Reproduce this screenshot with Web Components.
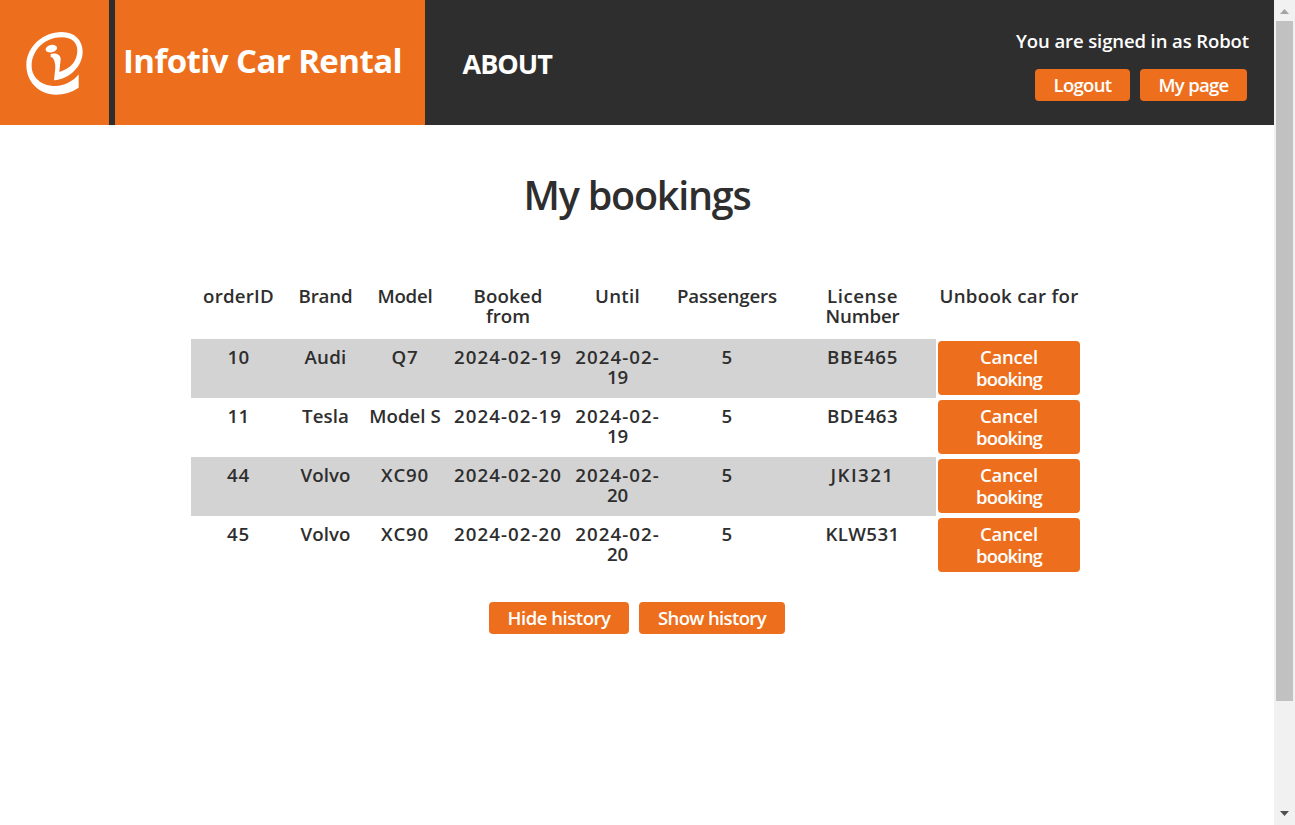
<!DOCTYPE html>
<html lang="en">
<head>
<meta charset="utf-8">
<title>Infotiv Car Rental</title>
<style>
html,body{margin:0;height:100%;overflow:hidden;background:#fff}
body{font-family:"Open Sans","Noto Sans",sans-serif;font-weight:600;color:#2e2e2e;--orange:#ed6f1d;--dark:#2e2e2e}
</style>
</head>
<body>
<rental-app></rental-app>
<script>
// A line of text whose tracking is adjusted to fill a set width.
class TrackedText extends HTMLElement {
  connectedCallback() {
    const root = this.attachShadow({mode: 'open'});
    root.innerHTML = `<style>:host{display:block;white-space:nowrap;width:max-content;margin:0 auto}span{display:inline-block}</style><span><slot></slot></span>`;
    const span = root.querySelector('span');
    const n = this.textContent.length;
    const ls = (Number(this.getAttribute('w')) - span.getBoundingClientRect().width) / n;
    span.style.letterSpacing = ls + 'px';
  }
}

class RentalButton extends HTMLElement {
  constructor() {
    super();
    this.attachShadow({mode: 'open'}).innerHTML = `<style>
      :host{display:block}
      button{display:block;box-sizing:border-box;width:100%;margin:0;border:0;border-radius:4px;padding:5px 0;background:var(--orange);color:#fff;font:inherit;font-size:18.5px;line-height:22px;text-align:center;cursor:pointer}
    </style><button><slot></slot></button>`;
  }
}

class RentalLogo extends HTMLElement {
  constructor() {
    super();
    this.attachShadow({mode: 'open'}).innerHTML = `<style>:host{display:block;width:109px;height:125px;background:var(--orange)}svg{display:block}</style>
    <svg width="109" height="125" viewBox="0 0 327 375" fill="#fff">
      <path d="M236 223V263Q205 284 168 284C115 284 79 243 79 195C79 140 130 96 185 96C225 96 248 122 248 155C248 198 210 236 162 241L166 203C166 188 162 172 152 171V162C166 157 182 163 182 177L178 216C210 207 232 185 232 151C232 128 215 112 185 112C135 112 95 150 95 198C95 233 125 258 165 258C195 258 220 243 236 223Z"/>
      <ellipse cx="154" cy="146" rx="17.5" ry="11" transform="rotate(-12 154 146)"/>
    </svg>`;
  }
}

class RentalHeader extends HTMLElement {
  constructor() {
    super();
    this.attachShadow({mode: 'open'}).innerHTML = `<style>
      :host{display:flex;height:125px;background:var(--dark);color:#fff}
      .title{width:310px;margin-left:6px;background:var(--orange);box-sizing:border-box;padding:41px 0 0 8px;font-size:33px;line-height:40px;font-weight:700}
      .title tracked-text,.about tracked-text{margin:0}
      .about{padding:44px 0 0 37.5px;font-size:27px;line-height:40px;font-weight:700}
      .user{margin-left:auto;padding:30px 25px 0 0;font-size:18.5px;line-height:22px}
      .buttons{display:flex;justify-content:flex-end;gap:10px;margin-top:17px;padding-right:2px}
    </style>
    <rental-logo></rental-logo>
    <div class="title"><tracked-text w="279">Infotiv Car Rental</tracked-text></div>
    <div class="about"><tracked-text w="89.5">ABOUT</tracked-text></div>
    <div class="user">
      <tracked-text w="233">You are signed in as Robot</tracked-text>
      <div class="buttons">
        <rental-button style="width:95px"><tracked-text w="58">Logout</tracked-text></rental-button>
        <rental-button style="width:107px"><tracked-text w="70">My page</tracked-text></rental-button>
      </div>
    </div>`;
  }
}

const HEAD = [[['orderID',71]],[['Brand',54]],[['Model',55]],[['Booked',69],['from',44]],[['Until',45]],[['Passengers',100]],[['License',71],['Number',74]],[['Unbook car for',139]]];
const row = (id, brand, model, day, plate) => [[id],[brand],[model],[['2024-02-' + day,108]],[['2024-02-',84.5],[day,21]],[['5',11]],[plate]];
const ROWS = [
  row(['10',22],['Audi',42],['Q7',27],'19',['BBE465',71]),
  row(['11',22],['Tesla',47],['Model S',71.5],'19',['BDE463',71]),
  row(['44',23],['Volvo',50],['XC90',48],'20',['JKI321',64]),
  row(['45',23],['Volvo',50],['XC90',48],'20',['KLW531',74])
];
const cell = lines => `<div class="cell">${lines.map(([t, w]) => `<tracked-text w="${w}">${t}</tracked-text>`).join('')}</div>`;

class BookingTable extends HTMLElement {
  constructor() {
    super();
    this.attachShadow({mode: 'open'}).innerHTML = `<style>
      :host{display:block;width:891px;margin-left:191px;font-size:18.7px;line-height:20px}
      .row{display:grid;grid-template-columns:95px 79px 80px 126px 93px 126px 145px 147px;height:59px}
      .head{height:61px}
      .cell{padding-top:8px}
      .row:nth-child(even of .row){background:linear-gradient(#d3d3d3,#d3d3d3) 0 0/745px 100% no-repeat}
      .row>:last-child{padding-left:1px}
      .action{padding:2px 2px 0 3px!important}
    </style>
    <div class="row head">${HEAD.map(cell).join('')}</div>
    ${ROWS.map(r => `<div class="row">${r.map(cell).join('')}<div class="action"><rental-button><tracked-text w="58">Cancel</tracked-text><tracked-text w="66">booking</tracked-text></rental-button></div></div>`).join('')}`;
  }
}

class PageScrollbar extends HTMLElement {
  constructor() {
    super();
    this.attachShadow({mode: 'open'}).innerHTML = `<style>
      :host{display:flex;flex-direction:column;width:21px;background:#f1f1f1}
      svg{display:block;flex:none}
      .thumb{height:680px;width:17px;margin-left:2px;background:#c1c1c1}
      .rest{flex:1}
    </style>
    <svg width="21" height="21"><path d="M6 14h9l-4.5-5z" fill="#a3a3a3"/></svg>
    <div class="thumb"></div><div class="rest"></div>
    <svg width="21" height="21"><path d="M6 7h9l-4.5 5z" fill="#505050"/></svg>`;
  }
}

class RentalApp extends HTMLElement {
  constructor() {
    super();
    this.attachShadow({mode: 'open'}).innerHTML = `<style>
      :host{display:flex;width:1295px;height:825px}
      main{width:1274px}
      h1{margin:0;padding:45px 0 58px;font-size:39.5px;line-height:50px;font-weight:600}
      .history{display:flex;justify-content:center;gap:10px;margin-top:27px}
    </style>
    <main>
      <rental-header></rental-header>
      <h1><tracked-text w="227">My bookings</tracked-text></h1>
      <booking-table></booking-table>
      <div class="history">
        <rental-button style="width:140px"><tracked-text w="103">Hide history</tracked-text></rental-button>
        <rental-button style="width:146px"><tracked-text w="108">Show history</tracked-text></rental-button>
      </div>
    </main>
    <page-scrollbar></page-scrollbar>`;
  }
}
customElements.define('rental-button', RentalButton);
customElements.define('rental-logo', RentalLogo);
customElements.define('rental-header', RentalHeader);
customElements.define('booking-table', BookingTable);
customElements.define('page-scrollbar', PageScrollbar);
customElements.define('rental-app', RentalApp);
customElements.define('tracked-text', TrackedText);
</script>
</body>
</html>
